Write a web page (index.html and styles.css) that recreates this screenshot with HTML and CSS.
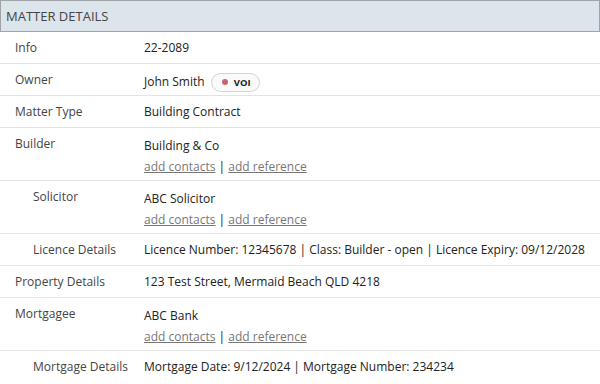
FILE: index.html
```html
<!DOCTYPE html>
<html lang="en">
<head>
    <meta charset="UTF-8">
    <title>Matter Details</title>
    <link rel="stylesheet" href="styles.css">
</head>
<body>
    <div class="panel">
        <div class="panel-header">MATTER DETAILS</div>
        <table class="details">
            <tr>
                <td class="label">Info</td>
                <td class="value">22-2089</td>
            </tr>
            <tr>
                <td class="label">Owner</td>
                <td class="value shifted">John Smith <span class="badge"><span class="dot"></span>VOI</span></td>
            </tr>
            <tr>
                <td class="label">Matter Type</td>
                <td class="value">Building Contract</td>
            </tr>
            <tr>
                <td class="label">Builder</td>
                <td class="value contact">Building &amp; Co<br>
                    <a href="#">add contacts</a> | <a href="#">add reference</a></td>
            </tr>
            <tr>
                <td class="label sub">Solicitor</td>
                <td class="value contact">ABC Solicitor<br>
                    <a href="#">add contacts</a> | <a href="#">add reference</a></td>
            </tr>
            <tr>
                <td class="label sub">Licence Details</td>
                <td class="value">Licence Number: 12345678 | Class: Builder - open | Licence Expiry: 09/12/2028</td>
            </tr>
            <tr>
                <td class="label">Property Details</td>
                <td class="value">123 Test Street, Mermaid Beach QLD 4218</td>
            </tr>
            <tr>
                <td class="label">Mortgagee</td>
                <td class="value contact">ABC Bank<br>
                    <a href="#">add contacts</a> | <a href="#">add reference</a></td>
            </tr>
            <tr>
                <td class="label sub">Mortgage Details</td>
                <td class="value">Mortgage Date: 9/12/2024 | Mortgage Number: 234234</td>
            </tr>
        </table>
    </div>
</body>
</html>
```

FILE: styles.css
```css
body {
    margin: 0;
    font-family: 'Open Sans', 'Noto Sans', sans-serif;
    font-size: 12px;
    color: #222;
    background: #fff;
}
.panel {
    width: 600px;
}
.panel-header {
    background: #dce4ec;
    border: 1px solid #a0a4a8;
    height: 30px;
    line-height: 31px;
    padding-left: 5px;
    font-size: 13px;
    color: #444;
}
.details {
    width: 100%;
    border-collapse: collapse;
    table-layout: fixed;
}
.details td {
    border-bottom: 1px solid #e4e4e4;
    padding: 5px 0;
    line-height: 21px;
    vertical-align: top;
    white-space: nowrap;
}
.details tr:last-child td {
    border-bottom: none;
}
.details td.contact {
    padding: 7px 0 3px;
}
.details td.shifted {
    padding: 7px 0 3px;
}
.label {
    box-sizing: border-box;
    width: 144px;
    padding-left: 15px !important;
    color: #444;
}
.label.sub {
    padding-left: 33px !important;
}
.value a {
    color: #777;
}
.badge {
    display: inline-block;
    margin-left: 3px;
    padding: 0 8px 0 10px;
    height: 17px;
    line-height: 17px;
    border: 1px solid #d4d4d8;
    border-radius: 10px;
    background: #fafafa;
    font-size: 9.5px;
    font-weight: bold;
    vertical-align: 0;
}
.dot {
    display: inline-block;
    width: 6px;
    height: 6px;
    border-radius: 50%;
    background: #c8637a;
    margin-right: 6px;
    vertical-align: 1px;
}
```
